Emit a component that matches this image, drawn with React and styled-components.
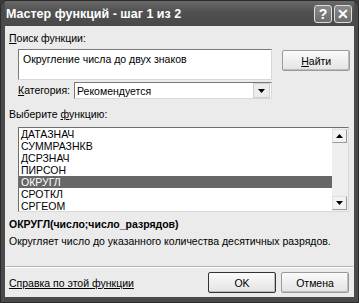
import React from 'react'
import styled, { createGlobalStyle } from 'styled-components'

const Global = createGlobalStyle`
  html, body {
    margin: 0;
    padding: 0;
    background: #3c3c3c;
  }
  body {
    font-family: "Liberation Sans", Arial, sans-serif;
    font-size: 10.5px;
    color: #000;
  }
`

const Window = styled.div`
  width: 359px;
  height: 303px;
  box-sizing: border-box;
  background: #4a4a4a;
  border: 1px solid #2a2a2a;
  border-radius: 7px 7px 0 0;
  display: flex;
  flex-direction: column;
  padding: 0 4px 5px 4px;
  overflow: hidden;
`

const TitleBar = styled.div`
  height: 25px;
  display: flex;
  align-items: center;
  justify-content: space-between;
  padding: 0 2px 0 1px;
  background: linear-gradient(#6a6a6a, #525252 40%, #484848);
`

const Title = styled.div`
  color: #fff;
  font-weight: bold;
  font-size: 12.5px;
`

const TitleButtons = styled.div`
  display: flex;
  gap: 2px;
`

const TitleButton = styled.div`
  width: 18px;
  height: 18px;
  box-sizing: border-box;
  border: 1px solid #dcdcdc;
  border-radius: 3px;
  background: linear-gradient(#8a8a8a, #6c6c6c);
  color: #fff;
  display: flex;
  align-items: center;
  justify-content: center;
  font-weight: bold;
  font-size: 14px;
`

const Body = styled.div`
  flex: 1;
  background: #ebebeb;
  display: flex;
  flex-direction: column;
  padding: 6px 4px 0 4px;
`

const Label = styled.div`
  height: 13px;
  line-height: 13px;
  width: ${p => (p.w ? `${p.w}px` : 'auto')};
  flex-shrink: 0;
  u { text-decoration: underline; }
`

const SearchRow = styled.div`
  display: flex;
  align-items: flex-start;
  margin-top: 4px;
`

const SearchLeft = styled.div`
  display: flex;
  flex-direction: column;
  margin-left: 9px;
  width: 256px;
`

const SearchBox = styled.div`
  height: 31px;
  box-sizing: border-box;
  background: #fff;
  border: 1px solid #7a7a7a;
  border-right-color: #d8d8d8;
  border-bottom-color: #d8d8d8;
  padding: 3px 4px;
  line-height: 13px;
`

const Button = styled.div`
  width: 68px;
  height: 21px;
  box-sizing: border-box;
  background: linear-gradient(#fafafa, #e4e4e4);
  border: 1px solid ${p => (p.dark ? '#333' : '#9a9a9a')};
  box-shadow: inset -1px -1px 0 #bdbdbd;
  border-radius: 2px;
  display: flex;
  align-items: center;
  justify-content: center;
`

const CategoryRow = styled.div`
  display: flex;
  align-items: center;
  margin-top: 2px;
`

const Select = styled.div`
  flex: 1;
  height: 17px;
  box-sizing: border-box;
  background: #fff;
  border: 1px solid #7a7a7a;
  border-right-color: #d8d8d8;
  border-bottom-color: #d8d8d8;
  display: flex;
  align-items: center;
  justify-content: space-between;
  padding-left: 2px;
`

const DropArrow = styled.div`
  width: 15px;
  height: 13px;
  margin-right: 1px;
  background: #ececec;
  border: 1px solid #cfcfcf;
  display: flex;
  align-items: center;
  justify-content: center;
`

const List = styled.div`
  margin: 6px 1px 0 9px;
  height: 85px;
  box-sizing: border-box;
  background: #fff;
  border: 1px solid #6e6e6e;
  border-right-color: #d8d8d8;
  border-bottom-color: #d8d8d8;
  display: flex;
  overflow: hidden;
`

const Items = styled.div`
  flex: 1;
  display: flex;
  flex-direction: column;
`

const Item = styled.div`
  height: 12px;
  line-height: 12px;
  padding-left: 2px;
  background: ${p => (p.selected ? '#676767' : 'transparent')};
  color: ${p => (p.selected ? '#fff' : '#000')};
`

const Scroll = styled.div`
  width: 15px;
  display: flex;
  flex-direction: column;
  justify-content: space-between;
  background: #efefef;
  padding: 1px 1px 1px 0;
`

const ScrollBtn = styled.div`
  height: 14px;
  box-sizing: border-box;
  background: #f2f2f2;
  border: 1px solid #9a9a9a;
  border-left-color: #e0e0e0;
  border-top-color: #e0e0e0;
  display: flex;
  align-items: center;
  justify-content: center;
`

const Signature = styled.div`
  font-weight: bold;
  margin-top: 6px;
  line-height: 13px;
`

const Description = styled.div`
  margin-top: 4px;
  line-height: 13px;
`

const Separator = styled.div`
  margin-top: auto;
  height: 0;
  border-top: 1px solid #b4b4b4;
  border-bottom: 1px solid #fff;
  margin-left: -3px;
  margin-right: -3px;
`

const Footer = styled.div`
  display: flex;
  align-items: center;
  justify-content: space-between;
  padding: 4px 0 4px 0;
`

const HelpLink = styled.a`
  color: #000;
  text-decoration: underline;
`

const Buttons = styled.div`
  display: flex;
  gap: 5px;
  margin-right: 1px;
`

const Arrow = ({ up }) => (
  <svg width="7" height="4" viewBox="0 0 7 4">
    <path d={up ? 'M0 4 L3.5 0 L7 4 Z' : 'M0 0 L3.5 4 L7 0 Z'} fill="#000" />
  </svg>
)

const funcs = ['ДАТАЗНАЧ', 'СУММРАЗНКВ', 'ДСРЗНАЧ', 'ПИРСОН', 'ОКРУГЛ', 'СРОТКЛ', 'СРГЕОМ']

export default function App() {
  return (
    <>
      <Global />
      <Window>
        <TitleBar>
          <Title>Мастер функций - шаг 1 из 2</Title>
          <TitleButtons>
            <TitleButton>?</TitleButton>
            <TitleButton>✕</TitleButton>
          </TitleButtons>
        </TitleBar>
        <Body>
          <Label><u>П</u>оиск функции:</Label>
          <SearchRow>
            <SearchLeft>
              <SearchBox>Округление числа до двух знаков</SearchBox>
              <CategoryRow>
                <Label w={56}><u>К</u>атегория:</Label>
                <Select>
                  Рекомендуется
                  <DropArrow><Arrow /></DropArrow>
                </Select>
              </CategoryRow>
            </SearchLeft>
            <Button style={{ marginLeft: 10, marginTop: 1 }}><span><u>Н</u>айти</span></Button>
          </SearchRow>
          <Label style={{ marginTop: 9 }}>Выберите <u>ф</u>ункцию:</Label>
          <List>
            <Items>
              {funcs.map(f => (
                <Item key={f} selected={f === 'ОКРУГЛ'}>{f}</Item>
              ))}
            </Items>
            <Scroll>
              <ScrollBtn><Arrow up /></ScrollBtn>
              <ScrollBtn><Arrow /></ScrollBtn>
            </Scroll>
          </List>
          <Signature>ОКРУГЛ(число;число_разрядов)</Signature>
          <Description>Округляет число до указанного количества десятичных разрядов.</Description>
          <Separator />
          <Footer>
            <HelpLink href="#">Справка по этой функции</HelpLink>
            <Buttons>
              <Button dark>OK</Button>
              <Button>Отмена</Button>
            </Buttons>
          </Footer>
        </Body>
      </Window>
    </>
  )
}
